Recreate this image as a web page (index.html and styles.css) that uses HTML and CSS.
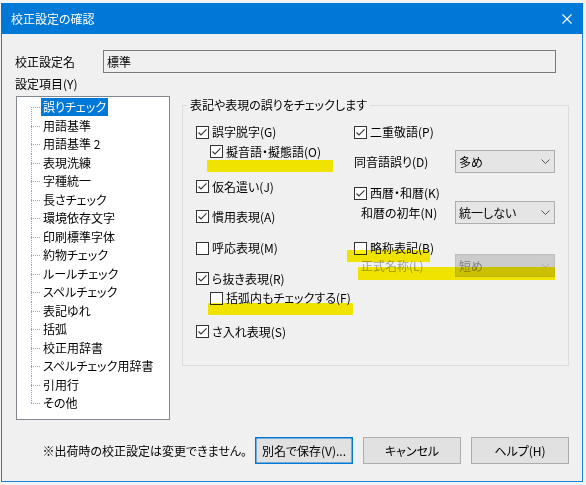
FILE: index.html
```html
<!DOCTYPE html>
<html lang="ja">
<head>
<meta charset="utf-8">
<title>校正設定の確認</title>
<link rel="stylesheet" href="styles.css">
</head>
<body>
<div class="window">
  <div class="titlebar">
    <span class="title">校正設定の確認</span>
    <svg class="close" width="10" height="10" viewBox="0 0 10 10"><path d="M0.5 0.5 L9.5 9.5 M9.5 0.5 L0.5 9.5" stroke="#fff" stroke-width="1.1" fill="none"/></svg>
  </div>
  <div class="content">
    <div class="name-row">
      <span class="name-label">校正設定名</span>
      <div class="field">標準</div>
    </div>
    <div class="section-label">設定項目(Y)</div>
    <div class="main">
      <ul class="tree">
        <li class="first"><span class="node selected">誤りチェック</span></li>
        <li><span class="node">用語基準</span></li>
        <li><span class="node">用語基準 2</span></li>
        <li><span class="node">表現洗練</span></li>
        <li><span class="node">字種統一</span></li>
        <li><span class="node">長さチェック</span></li>
        <li><span class="node">環境依存文字</span></li>
        <li><span class="node">印刷標準字体</span></li>
        <li><span class="node">約物チェック</span></li>
        <li><span class="node">ルールチェック</span></li>
        <li><span class="node">スペルチェック</span></li>
        <li><span class="node">表記ゆれ</span></li>
        <li><span class="node">括弧</span></li>
        <li><span class="node">校正用辞書</span></li>
        <li><span class="node">スペルチェック用辞書</span></li>
        <li><span class="node">引用行</span></li>
        <li class="last"><span class="node">その他</span></li>
      </ul>
      <div class="group">
        <span class="legend">表記や表現の誤りをチェックします</span>
        <div class="col col-left">
          <div class="row r-l1"><span class="cb"><svg viewBox="0 0 11 11" width="11" height="11"><path d="M1.5 5.5 L4 8 L9.5 2.3" fill="none" stroke="#333" stroke-width="1.1"/></svg></span>誤字脱字(G)</div>
          <div class="row sub r-l2"><span class="cb"><svg viewBox="0 0 11 11" width="11" height="11"><path d="M1.5 5.5 L4 8 L9.5 2.3" fill="none" stroke="#333" stroke-width="1.1"/></svg></span>擬音語・擬態語(O)</div>
          <div class="row r-l3"><span class="cb"><svg viewBox="0 0 11 11" width="11" height="11"><path d="M1.5 5.5 L4 8 L9.5 2.3" fill="none" stroke="#333" stroke-width="1.1"/></svg></span>仮名遣い(J)</div>
          <div class="row r-l4"><span class="cb"><svg viewBox="0 0 11 11" width="11" height="11"><path d="M1.5 5.5 L4 8 L9.5 2.3" fill="none" stroke="#333" stroke-width="1.1"/></svg></span>慣用表現(A)</div>
          <div class="row r-l5"><span class="cb"></span>呼応表現(M)</div>
          <div class="row r-l6"><span class="cb"><svg viewBox="0 0 11 11" width="11" height="11"><path d="M1.5 5.5 L4 8 L9.5 2.3" fill="none" stroke="#333" stroke-width="1.1"/></svg></span>ら抜き表現(R)</div>
          <div class="row sub r-l7"><span class="cb"></span>括弧内もチェックする(F)</div>
          <div class="row r-l8"><span class="cb"><svg viewBox="0 0 11 11" width="11" height="11"><path d="M1.5 5.5 L4 8 L9.5 2.3" fill="none" stroke="#333" stroke-width="1.1"/></svg></span>さ入れ表現(S)</div>
        </div>
        <div class="col col-right">
          <div class="row r-r1"><span class="cb"><svg viewBox="0 0 11 11" width="11" height="11"><path d="M1.5 5.5 L4 8 L9.5 2.3" fill="none" stroke="#333" stroke-width="1.1"/></svg></span>二重敬語(P)</div>
          <div class="combo-row r-r2">
            <span class="combo-label">同音語誤り(D)</span>
            <div class="combo"><span>多め</span><svg width="9" height="5" viewBox="0 0 9 5"><path d="M0.5 0.5 L4.5 4.5 L8.5 0.5" fill="none" stroke="#555" stroke-width="1"/></svg></div>
          </div>
          <div class="row r-r3"><span class="cb"><svg viewBox="0 0 11 11" width="11" height="11"><path d="M1.5 5.5 L4 8 L9.5 2.3" fill="none" stroke="#333" stroke-width="1.1"/></svg></span>西暦・和暦(K)</div>
          <div class="combo-row r-r4">
            <span class="combo-label indent">和暦の初年(N)</span>
            <div class="combo"><span>統一しない</span><svg width="9" height="5" viewBox="0 0 9 5"><path d="M0.5 0.5 L4.5 4.5 L8.5 0.5" fill="none" stroke="#555" stroke-width="1"/></svg></div>
          </div>
          <div class="row r-r5"><span class="cb"></span>略称表記(B)</div>
          <div class="combo-row r-r6 disabled">
            <span class="combo-label indent">正式名称(L)</span>
            <div class="combo"><span>短め</span><svg width="9" height="5" viewBox="0 0 9 5"><path d="M0.5 0.5 L4.5 4.5 L8.5 0.5" fill="none" stroke="#aaa" stroke-width="1"/></svg></div>
          </div>
        </div>
      </div>
    </div>
    <div class="footer">
      <span class="note">※出荷時の校正設定は変更できません。</span>
      <button class="btn default">別名で保存(V)...</button>
      <button class="btn">キャンセル</button>
      <button class="btn">ヘルプ(H)</button>
    </div>
  </div>
  <div class="mark m1"></div>
  <div class="mark m2"></div>
  <div class="mark m3"></div>
  <div class="mark m4"></div>
</div>
</body>
</html>
```
FILE: styles.css
```css
* { box-sizing: border-box; }
html, body { margin: 0; padding: 0; }
body {
  background: #f3f3f3;
  font-family: "Noto Sans CJK JP", "Noto Sans", sans-serif;
  font-size: 12px;
  font-feature-settings: "palt";
  color: #000;
  line-height: 16px;
}
.window {
  position: relative;
  margin: 3px 0 0 1px;
  width: 582px;
  height: 479px;
  border: 1px solid #1a84d8;
  border-top: 0;
  background: #f0f0f0;
  display: flex;
  flex-direction: column;
}
.titlebar {
  height: 31px;
  margin: 0 -1px;
  background: #0078d7;
  color: #fff;
  display: flex;
  align-items: center;
  justify-content: space-between;
  padding: 1px 11px 0 10px;
}
.title { line-height: 16px; }
.close { display: block; }

.name-row {
  margin-top: 16px;
  padding-left: 13px;
  height: 23px;
  display: flex;
  align-items: center;
}
.name-label { width: 88px; }
.field {
  width: 453px;
  height: 23px;
  border: 1px solid #7a7a7a;
  background: #f0f0f0;
  padding-left: 3px;
  line-height: 21px;
}
.section-label {
  margin-top: 3px;
  padding-left: 13px;
  line-height: 16px;
}
.main {
  margin-top: 4px;
  padding-left: 14px;
  display: flex;
  gap: 12px;
  align-items: flex-start;
}
.tree {
  width: 154px;
  height: 324px;
  margin: 0;
  padding: 1px 0 0 0;
  list-style: none;
  border: 1px solid #828790;
  background: #fff;
}
.tree li {
  position: relative;
  height: 18.5px;
  padding-left: 24px;
  display: flex;
  align-items: center;
}
.tree li::before {
  content: "";
  position: absolute;
  left: 14px;
  top: 9px;
  width: 9px;
  height: 1px;
  background-image: linear-gradient(to right, #a0a0a0 50%, transparent 50%);
  background-size: 2px 1px;
}
.tree li::after {
  content: "";
  position: absolute;
  left: 14px;
  top: 0;
  bottom: 0;
  width: 1px;
  background-image: linear-gradient(to bottom, #a0a0a0 50%, transparent 50%);
  background-size: 1px 2px;
}
.tree li.first::after { top: 9px; }
.tree li.last::after { bottom: auto; height: 10px; }
.node {
  display: inline-block;
  height: 18px;
  line-height: 18px;
  padding: 0 2px;
  white-space: nowrap;
}
.node.selected { background: #0078d7; color: #fff; }

.group {
  position: relative;
  width: 387px;
  height: 261px;
  margin-top: 9px;
  border: 1px solid #dcdcdc;
  padding-left: 13px;
  display: flex;
}
.legend {
  position: absolute;
  top: -9px;
  left: 4px;
  padding: 0 3px;
  background: #f0f0f0;
  line-height: 16px;
  white-space: nowrap;
}
.col { display: flex; flex-direction: column; }
.col-left { width: 158px; }
.col-right { width: 210px; }
.row {
  height: 16px;
  display: flex;
  align-items: center;
  gap: 3px;
  white-space: nowrap;
}
.row.sub { padding-left: 14px; }
.cb {
  flex: none;
  width: 13px;
  height: 13px;
  border: 1px solid #333;
  background: #fff;
  display: flex;
}
.cb svg { display: block; }

.r-l1 { margin-top: 18px; }
.r-l2 { margin-top: 3.5px; }
.r-l3 { margin-top: 19px; }
.r-l4 { margin-top: 14px; }
.r-l5 { margin-top: 15.5px; }
.r-l6 { margin-top: 14.5px; }
.r-l7 { margin-top: 3.5px; }
.r-l8 { margin-top: 17.5px; }

.r-r1 { margin-top: 18px; }
.r-r2 { margin-top: 10px; }
.r-r3 { margin-top: 12px; }
.r-r4 { margin-top: 0; }
.r-r5 { margin-top: 16px; }
.r-r6 { margin-top: -2px; }

.combo-row {
  height: 23px;
  display: flex;
  align-items: center;
  white-space: nowrap;
}
.combo-label { width: 101px; }
.combo-label.indent { padding-left: 7px; }
.combo {
  width: 100px;
  height: 23px;
  border: 1px solid #adadad;
  background: #e5e5e5;
  display: flex;
  align-items: center;
  justify-content: space-between;
  padding: 0 4px 0 3px;
}
.combo svg { display: block; }
.disabled .combo-label { color: #a0a0a0; }
.disabled .combo { background: #cccccc; border-color: #bfbfbf; color: #838383; }

.footer {
  margin-top: 17px;
  padding-right: 13px;
  display: flex;
  justify-content: flex-end;
  align-items: center;
  gap: 10px;
}
.note { margin-right: -2px; white-space: nowrap; }
.btn {
  width: 98px;
  height: 27px;
  border: 1px solid #adadad;
  background: #e1e1e1;
  font: inherit;
  font-feature-settings: "palt";
  color: #000;
  padding: 0;
  white-space: nowrap;
}
.btn.default { border-color: #0078d7; box-shadow: inset 0 0 0 0.5px #0078d7; }

.mark {
  position: absolute;
  background: #fff200;
  mix-blend-mode: multiply;
  border-radius: 1px;
}
.m1 { left: 205px; top: 157px; width: 126px; height: 12px; }
.m2 { left: 345px; top: 247px; width: 83px; height: 12px; }
.m3 { left: 356px; top: 264px; width: 197px; height: 13px; }
.m4 { left: 206px; top: 300px; width: 145px; height: 12px; }
```
